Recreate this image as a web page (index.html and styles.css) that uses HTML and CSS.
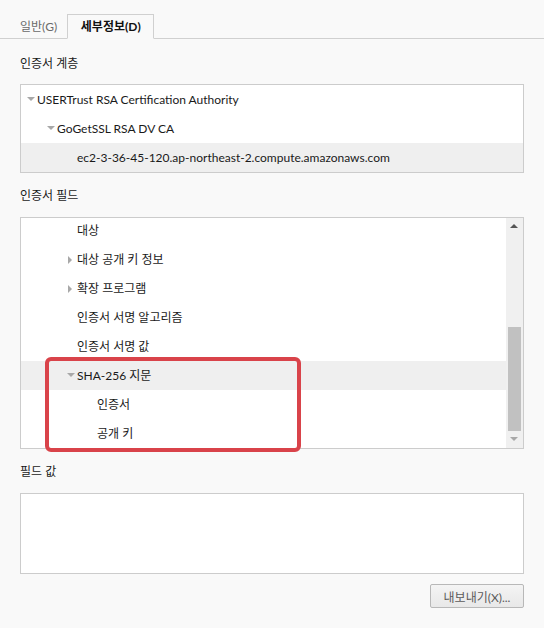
FILE: index.html
```html
<!DOCTYPE html>
<html lang="ko">
<head>
<meta charset="utf-8">
<link rel="stylesheet" href="styles.css">
</head>
<body>
<div class="tabs">
  <div class="tab">일반(G)</div>
  <div class="tab active">세부정보(D)</div>
</div>
<div class="content">
  <div class="label label-first">인증서 계층</div>
  <div class="box hier">
    <div class="row lvl1"><span class="tri down"></span>USERTrust RSA Certification Authority</div>
    <div class="row lvl2"><span class="tri down"></span>GoGetSSL RSA DV CA</div>
    <div class="row lvl3 sel">ec2-3-36-45-120.ap-northeast-2.compute.amazonaws.com</div>
  </div>

  <div class="label">인증서 필드</div>
  <div class="box fields">
    <div class="list">
      <div class="rows">
        <div class="row f1"><span class="tri none"></span>대상</div>
        <div class="row f1"><span class="tri right"></span>대상 공개 키 정보</div>
        <div class="row f1"><span class="tri right"></span>확장 프로그램</div>
        <div class="row f1"><span class="tri none"></span>인증서 서명 알고리즘</div>
        <div class="row f1"><span class="tri none"></span>인증서 서명 값</div>
        <div class="row f1 sel"><span class="tri down"></span>SHA-256 지문</div>
        <div class="row f2">인증서</div>
        <div class="row f2">공개 키</div>
      </div>
    </div>
    <div class="scrollbar">
      <div class="arrow up"></div>
      <div class="track"><div class="thumb"></div></div>
      <div class="arrow dn"></div>
    </div>
    <div class="mark"></div>
  </div>

  <div class="label">필드 값</div>
  <div class="box value"></div>
  <div class="actions">
    <button class="btn" type="button">내보내기(X)...</button>
  </div>
</div>
</body>
</html>
```
FILE: styles.css
```css
* { box-sizing: border-box; }
html, body { margin: 0; padding: 0; }
body {
  background: #f9f9f9;
  color: #1a1a1a;
  font-family: "Lato", "Noto Sans CJK KR", sans-serif;
  font-size: 12px;
  width: 544px;
  height: 628px;
  overflow: hidden;
}
.tabs {
  display: flex;
  align-items: flex-end;
  height: 39px;
  padding-left: 10px;
  border-bottom: 1px solid #d0d0d0;
}
.tab {
  height: 24px;
  line-height: 23px;
  padding: 0 10px;
  color: #6a6a6a;
  margin-bottom: -1px;
}
.tab.active {
  height: 25px;
  width: 87px;
  padding: 0;
  text-align: center;
  color: #111;
  font-weight: bold;
  background: #f9f9f9;
  border: 1px solid #d0d0d0;
  border-bottom: 1px solid #f9f9f9;
}
.content { padding: 0 20px; }
.label {
  height: 20px;
  line-height: 20px;
  margin-top: 13px;
  margin-bottom: 11px;
}
.label-first { margin-top: 15px; margin-bottom: 10px; }
.box {
  background: #fff;
  border: 1px solid #cccccc;
  position: relative;
}
.row {
  height: 29px;
  line-height: 28px;
  display: flex;
  align-items: center;
  white-space: nowrap;
}
.row.sel { background: #efefef; }
.hier .lvl1 { padding-left: 5px; }
.hier .lvl2 { padding-left: 25px; }
.hier .lvl3 { padding-left: 56px; }
.tri {
  display: inline-block;
  width: 11px;
  height: 8px;
  position: relative;
  flex: none;
}
.tri.down::before {
  content: "";
  position: absolute;
  left: 1px;
  top: 1px;
  border-left: 4px solid transparent;
  border-right: 4px solid transparent;
  border-top: 4px solid #a8a8a8;
}
.tri.right::before {
  content: "";
  position: absolute;
  left: 2px;
  top: 0;
  border-top: 4px solid transparent;
  border-bottom: 4px solid transparent;
  border-left: 4px solid #a8a8a8;
}
.fields {
  height: 232px;
  display: flex;
}
.list {
  flex: 1;
  overflow: hidden;
}
.rows { margin-top: -2px; }
.fields .f1 { padding-left: 45px; }
.fields .f2 { padding-left: 76px; }
.scrollbar {
  width: 17px;
  flex: none;
  background: #f0f0f0;
  display: flex;
  flex-direction: column;
}
.arrow { height: 17px; position: relative; flex: none; }
.arrow.up::before {
  content: "";
  position: absolute;
  left: 4px;
  top: 6px;
  border-left: 4px solid transparent;
  border-right: 4px solid transparent;
  border-bottom: 4px solid #555;
}
.arrow.dn::before {
  content: "";
  position: absolute;
  left: 4px;
  top: 6px;
  border-left: 4px solid transparent;
  border-right: 4px solid transparent;
  border-top: 4px solid #a8a8a8;
}
.track { flex: 1; position: relative; }
.thumb {
  position: absolute;
  left: 2px;
  right: 2px;
  bottom: 0;
  height: 104px;
  background: #c1c1c1;
}
.mark {
  position: absolute;
  left: 24px;
  top: 139px;
  width: 256px;
  height: 95px;
  border: 4px solid #d9434a;
  border-radius: 6px;
  pointer-events: none;
}
.value { height: 81px; }
.actions {
  display: flex;
  justify-content: flex-end;
  margin-top: 10px;
}
.btn {
  width: 94px;
  height: 24px;
  padding: 0;
  font-family: "Lato", "Noto Sans CJK KR", sans-serif;
  font-size: 12px;
  color: #5a5a5a;
  background: linear-gradient(#f4f4f4, #e8e8e8);
  border: 1px solid #b8b8b8;
  border-radius: 2px;
}
```
